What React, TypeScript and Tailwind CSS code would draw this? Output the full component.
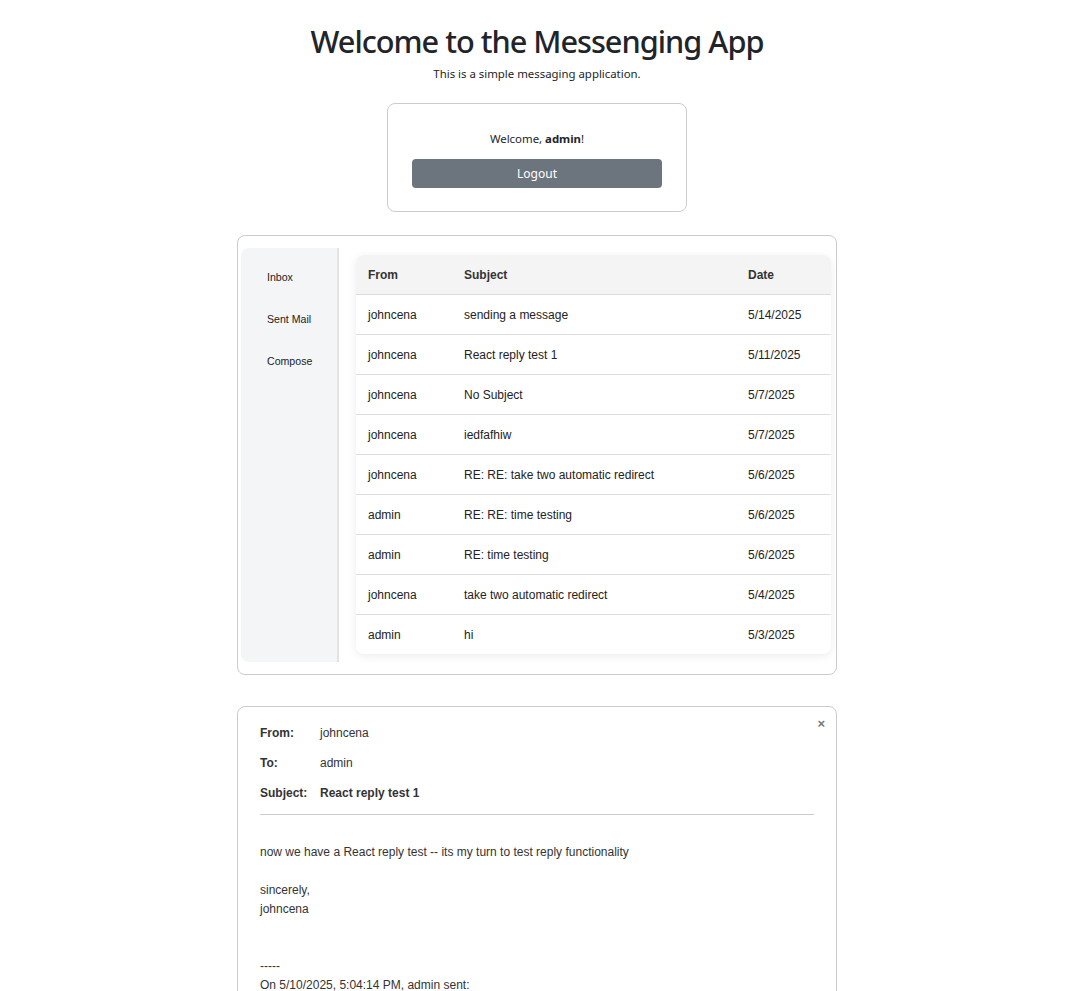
import React from 'react';

const messages = [
  { from: 'johncena', subject: 'sending a message', date: '5/14/2025' },
  { from: 'johncena', subject: 'React reply test 1', date: '5/11/2025' },
  { from: 'johncena', subject: 'No Subject', date: '5/7/2025' },
  { from: 'johncena', subject: 'iedfafhiw', date: '5/7/2025' },
  { from: 'johncena', subject: 'RE: RE: take two automatic redirect', date: '5/6/2025' },
  { from: 'admin', subject: 'RE: RE: time testing', date: '5/6/2025' },
  { from: 'admin', subject: 'RE: time testing', date: '5/6/2025' },
  { from: 'johncena', subject: 'take two automatic redirect', date: '5/4/2025' },
  { from: 'admin', subject: 'hi', date: '5/3/2025' },
];

const body = `now we have a React reply test -- its my turn to test reply functionality

sincerely,
johncena


-----
On 5/10/2025, 5:04:14 PM, admin sent:`;

export default function App() {
  return (
    <div className="min-h-screen bg-white text-[#212529] font-['Noto_Sans',sans-serif]">
      <div className="flex flex-col items-center pt-[19px] pr-[2px]">
        <h1 className="text-[30.7px] leading-[44px] font-medium tracking-[-1px]">Welcome to the Messenging App</h1>
        <p className="text-[11.4px] leading-[18px] mt-[2px]">This is a simple messaging application.</p>

        <div className="mt-[20px] w-[300px] h-[109px] border border-[#ccc] rounded-lg flex flex-col items-center pt-[26px]">
          <p className="text-[11.4px] leading-[18px]">
            Welcome, <span className="font-bold">admin</span>!
          </p>
          <button className="mt-[11px] w-[250px] h-[29px] bg-[#6c757d] text-white text-[12px] rounded-[4px]">Logout</button>
        </div>

        <div className="mt-[23px] w-[600px] border border-[#ccc] rounded-lg pt-3 pb-3 pl-[3px] pr-[5px] flex font-['Liberation_Sans',Arial,sans-serif]">
          <div className="w-[98px] bg-[#f4f5f7] border-r-2 border-[#e3e3e3] rounded-l-lg pt-[22px] pl-[26px] flex flex-col gap-[28px] text-[10.6px] leading-[14px] text-[#222]">
            <span>Inbox</span>
            <span>Sent Mail</span>
            <span>Compose</span>
          </div>
          <div className="flex-1 ml-[17px] mt-[7px] mb-[8px]">
            <div className="rounded-lg shadow-[0_2px_8px_rgba(0,0,0,0.08)] overflow-hidden bg-white">
              <table className="w-full text-[12px] text-[#222] border-collapse">
                <thead>
                  <tr className="bg-[#f4f4f4] h-[39px] text-left text-[#333]">
                    <th className="font-bold pl-[12px] pt-[2px] w-[96px]">From</th>
                    <th className="font-bold pl-[12px] pt-[2px]">Subject</th>
                    <th className="font-bold pl-[12px] pt-[2px] w-[95px]">Date</th>
                  </tr>
                </thead>
                <tbody>
                  {messages.map((m, i) => (
                    <tr key={i} className="h-[40px] border-t border-[#ddd]">
                      <td className="pl-[12px] pt-[2px]">{m.from}</td>
                      <td className="pl-[12px] pt-[2px]">{m.subject}</td>
                      <td className="pl-[12px] pt-[2px]">{m.date}</td>
                    </tr>
                  ))}
                </tbody>
              </table>
            </div>
          </div>
        </div>

        <div className="relative mt-[31px] w-[600px] border border-[#ccc] rounded-lg px-[22px] pt-[18px] pb-4 font-['Liberation_Sans',Arial,sans-serif] text-[12px] text-[#333]">
          <span className="absolute right-[11px] top-[7px] text-[#777] text-[13px] font-bold">×</span>
          <div className="flex flex-col gap-[14px] leading-[16px]">
            <div className="flex"><span className="w-[60px] font-bold">From:</span><span>johncena</span></div>
            <div className="flex"><span className="w-[60px] font-bold">To:</span><span>admin</span></div>
            <div className="flex font-bold"><span className="w-[60px]">Subject:</span><span>React reply test 1</span></div>
          </div>
          <hr className="mt-[13px] border-t border-[#ccc]" />
          <div className="mt-[28px] whitespace-pre-wrap leading-[19px]">{body}</div>
        </div>
      </div>
    </div>
  );
}
